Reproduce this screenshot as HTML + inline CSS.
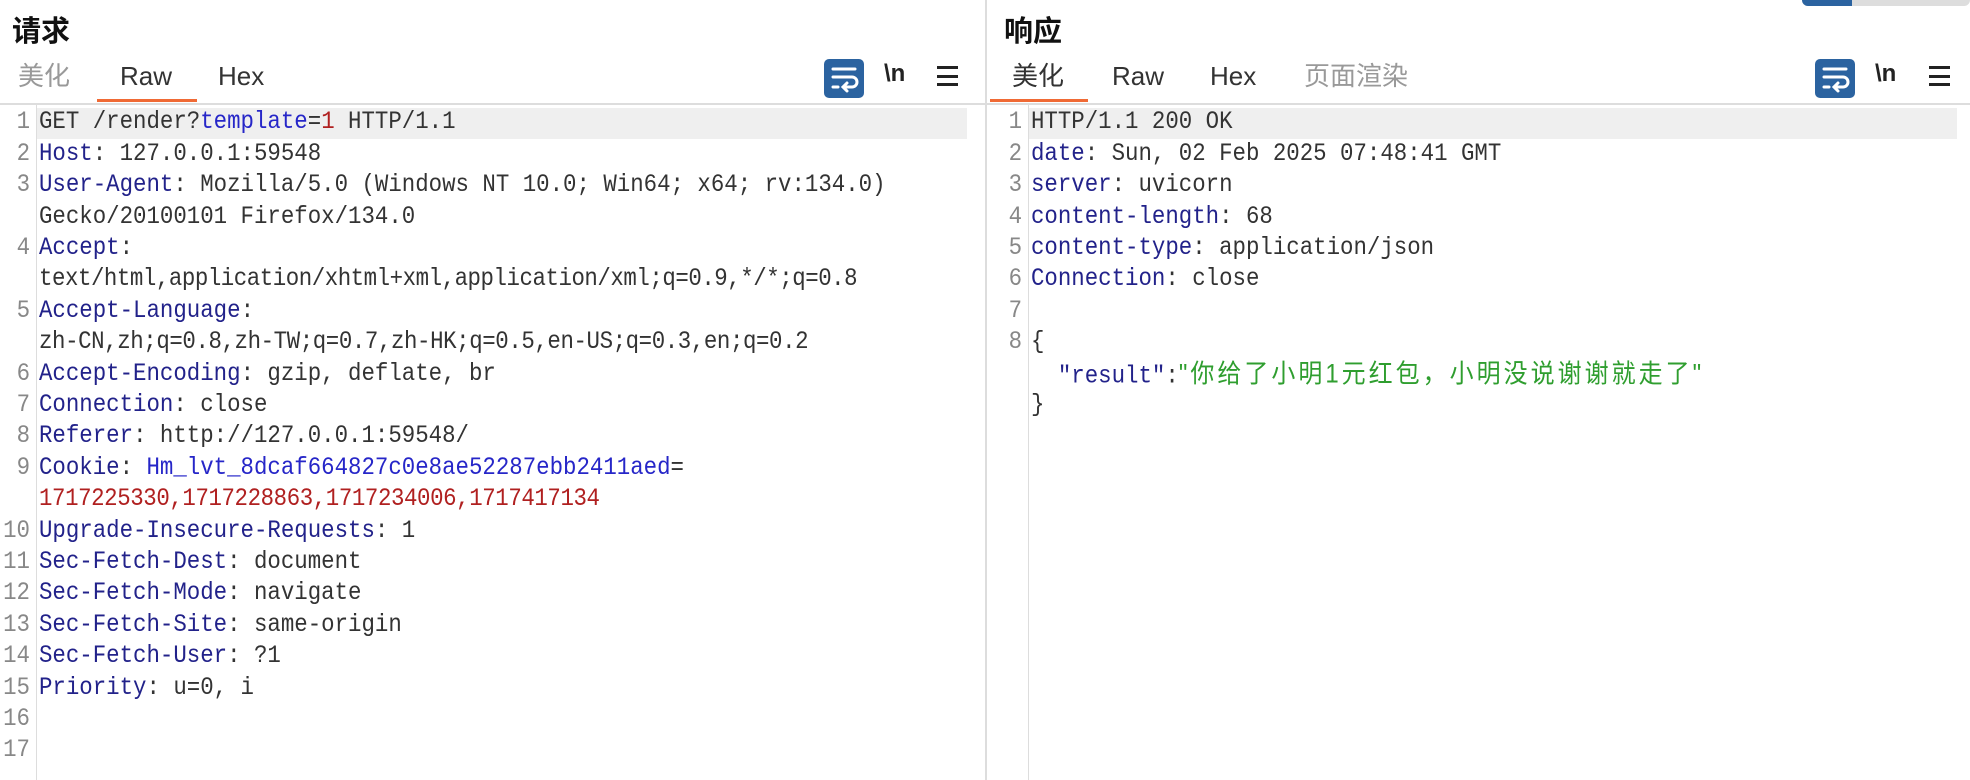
<!DOCTYPE html>
<html><head><meta charset="utf-8"><style>
*{margin:0;padding:0;box-sizing:border-box}
body{width:1970px;height:780px;background:#fff;position:relative;overflow:hidden;font-family:"Liberation Sans","Noto Sans CJK SC",sans-serif;color:#222}
.a{position:absolute;white-space:pre}
.title{font-size:29px;font-weight:bold;color:#111;top:8px}
.tab{font-size:26px;top:61px;color:#333;line-height:30px}
.dim{color:#999}
.ul{position:absolute;height:3px;background:#f06a35;top:99px}
.sep{position:absolute;height:2px;background:#ddd;top:103px}
.code{font-family:"Liberation Mono","Noto Sans CJK SC",monospace;font-size:22.4px;line-height:31.4px;height:31.4px;color:#333;transform:scaleY(1.1);transform-origin:0 60%}
.ln{color:#888;text-align:right;width:30px}
.k{color:#22228a}
.b{color:#2626c8}
.r{color:#b02020}
.g{color:#2f9e2f;font-family:"Liberation Sans","Noto Sans CJK SC",sans-serif;font-size:24px;letter-spacing:3px}
.hl{position:absolute;background:#efefef;height:31px;top:108px}
.gut{position:absolute;width:1px;background:#ddd;top:105px;bottom:0}
.ico{position:absolute;width:40px;height:39px;background:#2b63a0;border-radius:5px;top:59px}
.nl{font-size:24px;font-weight:bold;top:60px;color:#222}
</style></head><body>
<div style="position:absolute;left:985px;top:0;width:2px;height:780px;background:#ddd"></div>
<div style="position:absolute;left:1802px;top:0;width:168px;height:6px;background:#ddd;border-radius:0 0 6px 6px"></div>
<div style="position:absolute;left:1802px;top:0;width:50px;height:6px;background:#2b63a0;border-radius:0 0 0 6px"></div>

<div class="a title" style="left:12px">请求</div>
<div class="a tab dim" style="left:18px">美化</div>
<div class="a tab" style="left:120px">Raw</div>
<div class="a tab" style="left:218px">Hex</div>
<div class="ul" style="left:97px;width:100px"></div>
<div class="sep" style="left:0;width:985px"></div>

<div class="a title" style="left:1004px">响应</div>
<div class="a tab" style="left:1012px">美化</div>
<div class="a tab" style="left:1112px">Raw</div>
<div class="a tab" style="left:1210px">Hex</div>
<div class="a tab dim" style="left:1304px">页面渲染</div>
<div class="ul" style="left:990px;width:98px"></div>
<div class="sep" style="left:987px;width:983px"></div>

<svg class="ico" style="left:824px" viewBox="0 0 40 39"><g stroke="#fff" stroke-width="3" fill="none" stroke-linecap="round"><path d="M9 10H31"/><path d="M9 18H28a5 5 0 0 1 0 10H20"/><path d="M23 24l-4 4 4 4"/><path d="M9 28h5"/></g></svg>
<div class="a nl" style="left:884px">\n</div>
<div class="a" style="left:937px;top:66px;width:21px;height:20px;border-top:3px solid #222;border-bottom:3px solid #222"><div style="margin-top:5.5px;height:3px;background:#222"></div></div>

<svg class="ico" style="left:1815px" viewBox="0 0 40 39"><g stroke="#fff" stroke-width="3" fill="none" stroke-linecap="round"><path d="M9 10H31"/><path d="M9 18H28a5 5 0 0 1 0 10H20"/><path d="M23 24l-4 4 4 4"/><path d="M9 28h5"/></g></svg>
<div class="a nl" style="left:1875px">\n</div>
<div class="a" style="left:1929px;top:66px;width:21px;height:20px;border-top:3px solid #222;border-bottom:3px solid #222"><div style="margin-top:5.5px;height:3px;background:#222"></div></div>

<div class="hl" style="left:37px;width:930px"></div>
<div class="gut" style="left:36px"></div>
<div class="hl" style="left:1029px;width:928px"></div>
<div class="gut" style="left:1028px"></div>

<!-- left code -->
<div class="a code ln" style="left:0;top:107.3px">1</div><div class="a code" style="left:39px;top:107.3px">GET /render?<span class="b">template</span>=<span class="r">1</span> HTTP/1.1</div>
<div class="a code ln" style="left:0;top:138.7px">2</div><div class="a code" style="left:39px;top:138.7px"><span class="k">Host</span>: 127.0.0.1:59548</div>
<div class="a code ln" style="left:0;top:170.1px">3</div><div class="a code" style="left:39px;top:170.1px"><span class="k">User-Agent</span>: Mozilla/5.0 (Windows NT 10.0; Win64; x64; rv:134.0)</div>
<div class="a code" style="left:39px;top:201.5px">Gecko/20100101 Firefox/134.0</div>
<div class="a code ln" style="left:0;top:232.9px">4</div><div class="a code" style="left:39px;top:232.9px"><span class="k">Accept</span>:</div>
<div class="a code" style="left:39px;top:264.3px;letter-spacing:-0.45px">text/html,application/xhtml+xml,application/xml;q=0.9,*/*;q=0.8</div>
<div class="a code ln" style="left:0;top:295.7px">5</div><div class="a code" style="left:39px;top:295.7px"><span class="k">Accept-Language</span>:</div>
<div class="a code" style="left:39px;top:327.1px;letter-spacing:-0.4px">zh-CN,zh;q=0.8,zh-TW;q=0.7,zh-HK;q=0.5,en-US;q=0.3,en;q=0.2</div>
<div class="a code ln" style="left:0;top:358.5px">6</div><div class="a code" style="left:39px;top:358.5px"><span class="k">Accept-Encoding</span>: gzip, deflate, br</div>
<div class="a code ln" style="left:0;top:389.9px">7</div><div class="a code" style="left:39px;top:389.9px"><span class="k">Connection</span>: close</div>
<div class="a code ln" style="left:0;top:421.3px">8</div><div class="a code" style="left:39px;top:421.3px"><span class="k">Referer</span>: http://127.0.0.1:59548/</div>
<div class="a code ln" style="left:0;top:452.7px">9</div><div class="a code" style="left:39px;top:452.7px"><span class="k">Cookie</span>: <span class="b">Hm_lvt_8dcaf664827c0e8ae52287ebb2411aed</span>=</div>
<div class="a code r" style="left:39px;top:484.1px;letter-spacing:-0.4px">1717225330,1717228863,1717234006,1717417134</div>
<div class="a code ln" style="left:0;top:515.5px">10</div><div class="a code" style="left:39px;top:515.5px"><span class="k">Upgrade-Insecure-Requests</span>: 1</div>
<div class="a code ln" style="left:0;top:546.9px">11</div><div class="a code" style="left:39px;top:546.9px"><span class="k">Sec-Fetch-Dest</span>: document</div>
<div class="a code ln" style="left:0;top:578.3px">12</div><div class="a code" style="left:39px;top:578.3px"><span class="k">Sec-Fetch-Mode</span>: navigate</div>
<div class="a code ln" style="left:0;top:609.7px">13</div><div class="a code" style="left:39px;top:609.7px"><span class="k">Sec-Fetch-Site</span>: same-origin</div>
<div class="a code ln" style="left:0;top:641.1px">14</div><div class="a code" style="left:39px;top:641.1px"><span class="k">Sec-Fetch-User</span>: ?1</div>
<div class="a code ln" style="left:0;top:672.5px">15</div><div class="a code" style="left:39px;top:672.5px"><span class="k">Priority</span>: u=0, i</div>
<div class="a code ln" style="left:0;top:703.9px">16</div>
<div class="a code ln" style="left:0;top:735.3px">17</div>

<!-- right code -->
<div class="a code ln" style="left:992px;top:107.3px">1</div><div class="a code" style="left:1031px;top:107.3px">HTTP/1.1 200 OK</div>
<div class="a code ln" style="left:992px;top:138.7px">2</div><div class="a code" style="left:1031px;top:138.7px"><span class="k">date</span>: Sun, 02 Feb 2025 07:48:41 GMT</div>
<div class="a code ln" style="left:992px;top:170.1px">3</div><div class="a code" style="left:1031px;top:170.1px"><span class="k">server</span>: uvicorn</div>
<div class="a code ln" style="left:992px;top:201.5px">4</div><div class="a code" style="left:1031px;top:201.5px"><span class="k">content-length</span>: 68</div>
<div class="a code ln" style="left:992px;top:232.9px">5</div><div class="a code" style="left:1031px;top:232.9px"><span class="k">content-type</span>: application/json</div>
<div class="a code ln" style="left:992px;top:264.3px">6</div><div class="a code" style="left:1031px;top:264.3px"><span class="k">Connection</span>: close</div>
<div class="a code ln" style="left:992px;top:295.7px">7</div>
<div class="a code ln" style="left:992px;top:327.1px">8</div><div class="a code" style="left:1031px;top:327.1px">{</div>
<div class="a code" style="left:1031px;top:358.5px">  <span class="k">"result"</span>:<span class="g">"你给了小明1元红包，小明没说谢谢就走了"</span></div>
<div class="a code" style="left:1031px;top:389.9px">}</div>
</body></html>
